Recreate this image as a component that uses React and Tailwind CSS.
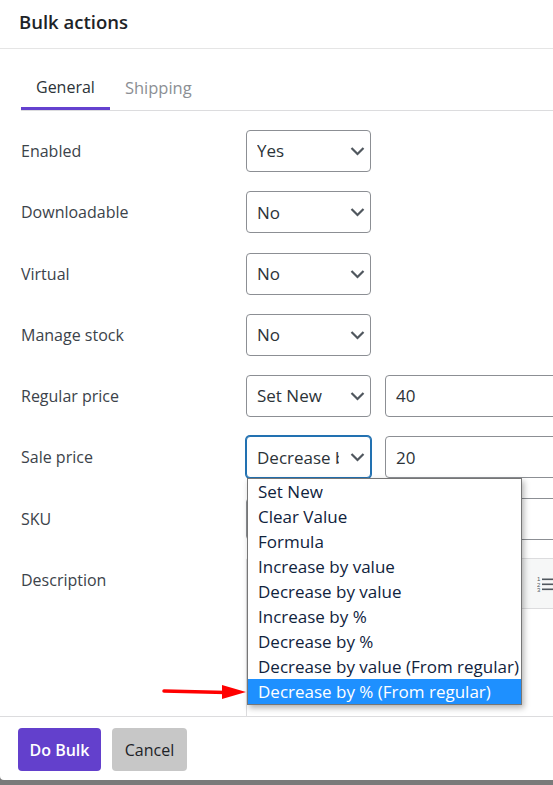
import React from "react";

const font = { fontFamily: '"Open Sans", "Noto Sans", sans-serif' };

const Chevron = () => (
  <svg width="15" height="10" viewBox="0 0 15 10" className="shrink-0">
    <path d="M1.5 2 L7.5 8 L13.5 2" fill="none" stroke="#50575e" strokeWidth="2.2" />
  </svg>
);

const Select = ({ value, focused }) => (
  <div
    className={`w-[125px] h-[42px] rounded-[4px] bg-white flex items-center pl-[10px] pr-[5px] ${
      focused
        ? "border border-[#2271b1] shadow-[0_0_0_1px_#2271b1]"
        : "border border-[#8c8f94]"
    }`}
  >
    <span className="flex-1 overflow-hidden whitespace-nowrap text-[17px] text-[#2c3338] mr-[11px]">{value}</span>
    <Chevron />
  </div>
);

const TextInput = ({ value, wide }) => (
  <div
    className={`h-[42px] rounded-[4px] border border-[#8c8f94] bg-white flex items-center pl-[10px] text-[17px] text-[#2c3338] ${
      wide ? "w-[320px]" : "w-[200px]"
    }`}
  >
    {value}
  </div>
);

const rows = [
  { label: "Enabled", value: "Yes" },
  { label: "Downloadable", value: "No" },
  { label: "Virtual", value: "No" },
  { label: "Manage stock", value: "No" },
  { label: "Regular price", value: "Set New", input: "40" },
  { label: "Sale price", value: "Decrease by %", input: "20", focused: true },
];

const options = [
  "Set New",
  "Clear Value",
  "Formula",
  "Increase by value",
  "Decrease by value",
  "Increase by %",
  "Decrease by %",
  "Decrease by value (From regular)",
  "Decrease by % (From regular)",
];

export default function App() {
  return (
    <div className="w-[553px] h-[785px] bg-[#7a7a7a] overflow-hidden relative" style={font}>
      <div className="w-[620px] h-[780px] bg-white rounded-bl-[4px] flex flex-col">
        {/* HEADER */}
        <div className="h-[49px] border-b border-[#e5e5e5] flex items-center px-[19px] shrink-0">
          <h2 className="text-[18.5px] font-semibold text-[#1d2327] -mt-[4px]">Bulk actions</h2>
        </div>

        {/* TABS */}
        <div className="mt-[17px] mx-[21px] border-b border-[#dcdcde] flex shrink-0">
          <div className="h-[44px] px-[15px] flex items-center border-b-[3px] border-[#6441cf] -mb-px text-[16px] text-[#2c3338]">
            General
          </div>
          <div className="h-[44px] px-[15px] flex items-center text-[16.5px] text-[#8c8f94]">Shipping</div>
        </div>

        {/* BODY */}
        <div className="flex-1 overflow-hidden pt-[19px] pl-[21px] flex flex-col gap-[19.3px]">
          {rows.map((r) => (
            <div key={r.label} className="flex items-center h-[42px] shrink-0">
              <div className="w-[225px] text-[16px] text-[#3c434a]">{r.label}</div>
              <Select value={r.value} focused={r.focused} />
              {r.input && (
                <div className="ml-[14px]">
                  <TextInput value={r.input} />
                </div>
              )}
            </div>
          ))}
          <div className="flex items-center h-[42px] shrink-0">
            <div className="w-[225px] text-[16px] text-[#3c434a]">SKU</div>
            <TextInput value="" wide />
          </div>
          <div className="flex items-start shrink-0 -mt-[1px]">
            <div className="w-[225px] h-[44px] flex items-center text-[16px] text-[#3c434a]">Description</div>
            <div className="w-[340px] h-[200px] border border-[#dcdcde] rounded-[2px]">
              <div className="h-[50px] bg-[#f6f7f7] border-b border-[#dcdcde] flex items-center justify-end pr-[28px]">
                <svg width="20" height="16" viewBox="0 0 20 16">
                  <text x="0" y="5" fontSize="6" fill="#50575e" fontFamily="Liberation Sans, sans-serif">1</text>
                  <text x="0" y="10.5" fontSize="6" fill="#50575e" fontFamily="Liberation Sans, sans-serif">2</text>
                  <text x="0" y="16" fontSize="6" fill="#50575e" fontFamily="Liberation Sans, sans-serif">3</text>
                  <rect x="5" y="2.5" width="15" height="1.6" fill="#50575e" />
                  <rect x="5" y="7.5" width="15" height="1.6" fill="#50575e" />
                  <rect x="5" y="12.5" width="15" height="1.6" fill="#50575e" />
                </svg>
              </div>
            </div>
          </div>
        </div>

        {/* FOOTER */}
        <div className="border-t border-[#dcdcde] pt-[11px] pb-[9px] px-[18px] flex gap-[11px] shrink-0">
          <button className="w-[83px] h-[43px] rounded-[4px] bg-[#6340cc] text-white text-[16px] font-semibold">
            Do Bulk
          </button>
          <button className="w-[75px] h-[43px] rounded-[4px] bg-[#c7c7c7] text-[#1d2327] text-[16px]">
            Cancel
          </button>
        </div>
      </div>

      {/* OPEN DROPDOWN */}
      <div className="absolute left-[247px] top-[478px] w-[275px] bg-white border border-[#767676] shadow-[2px_3px_6px_rgba(0,0,0,0.3)]">
        {options.map((o, i) => (
          <div
            key={o}
            className={`h-[25px] flex items-center pl-[10px] text-[17px] whitespace-nowrap ${
              i === options.length - 1 ? "bg-[#1e90ff] text-white" : "text-[#10233d]"
            }`}
          >
            {o}
          </div>
        ))}
      </div>

      {/* RED ARROW */}
      <svg className="absolute left-[160px] top-[682px]" width="90" height="20" viewBox="0 0 90 20">
        <line x1="4" y1="9" x2="66" y2="10.5" stroke="#ff0000" strokeWidth="3.5" strokeLinecap="round" />
        <polygon points="62,3 86,10 62,17" fill="#ff0000" />
      </svg>
    </div>
  );
}
